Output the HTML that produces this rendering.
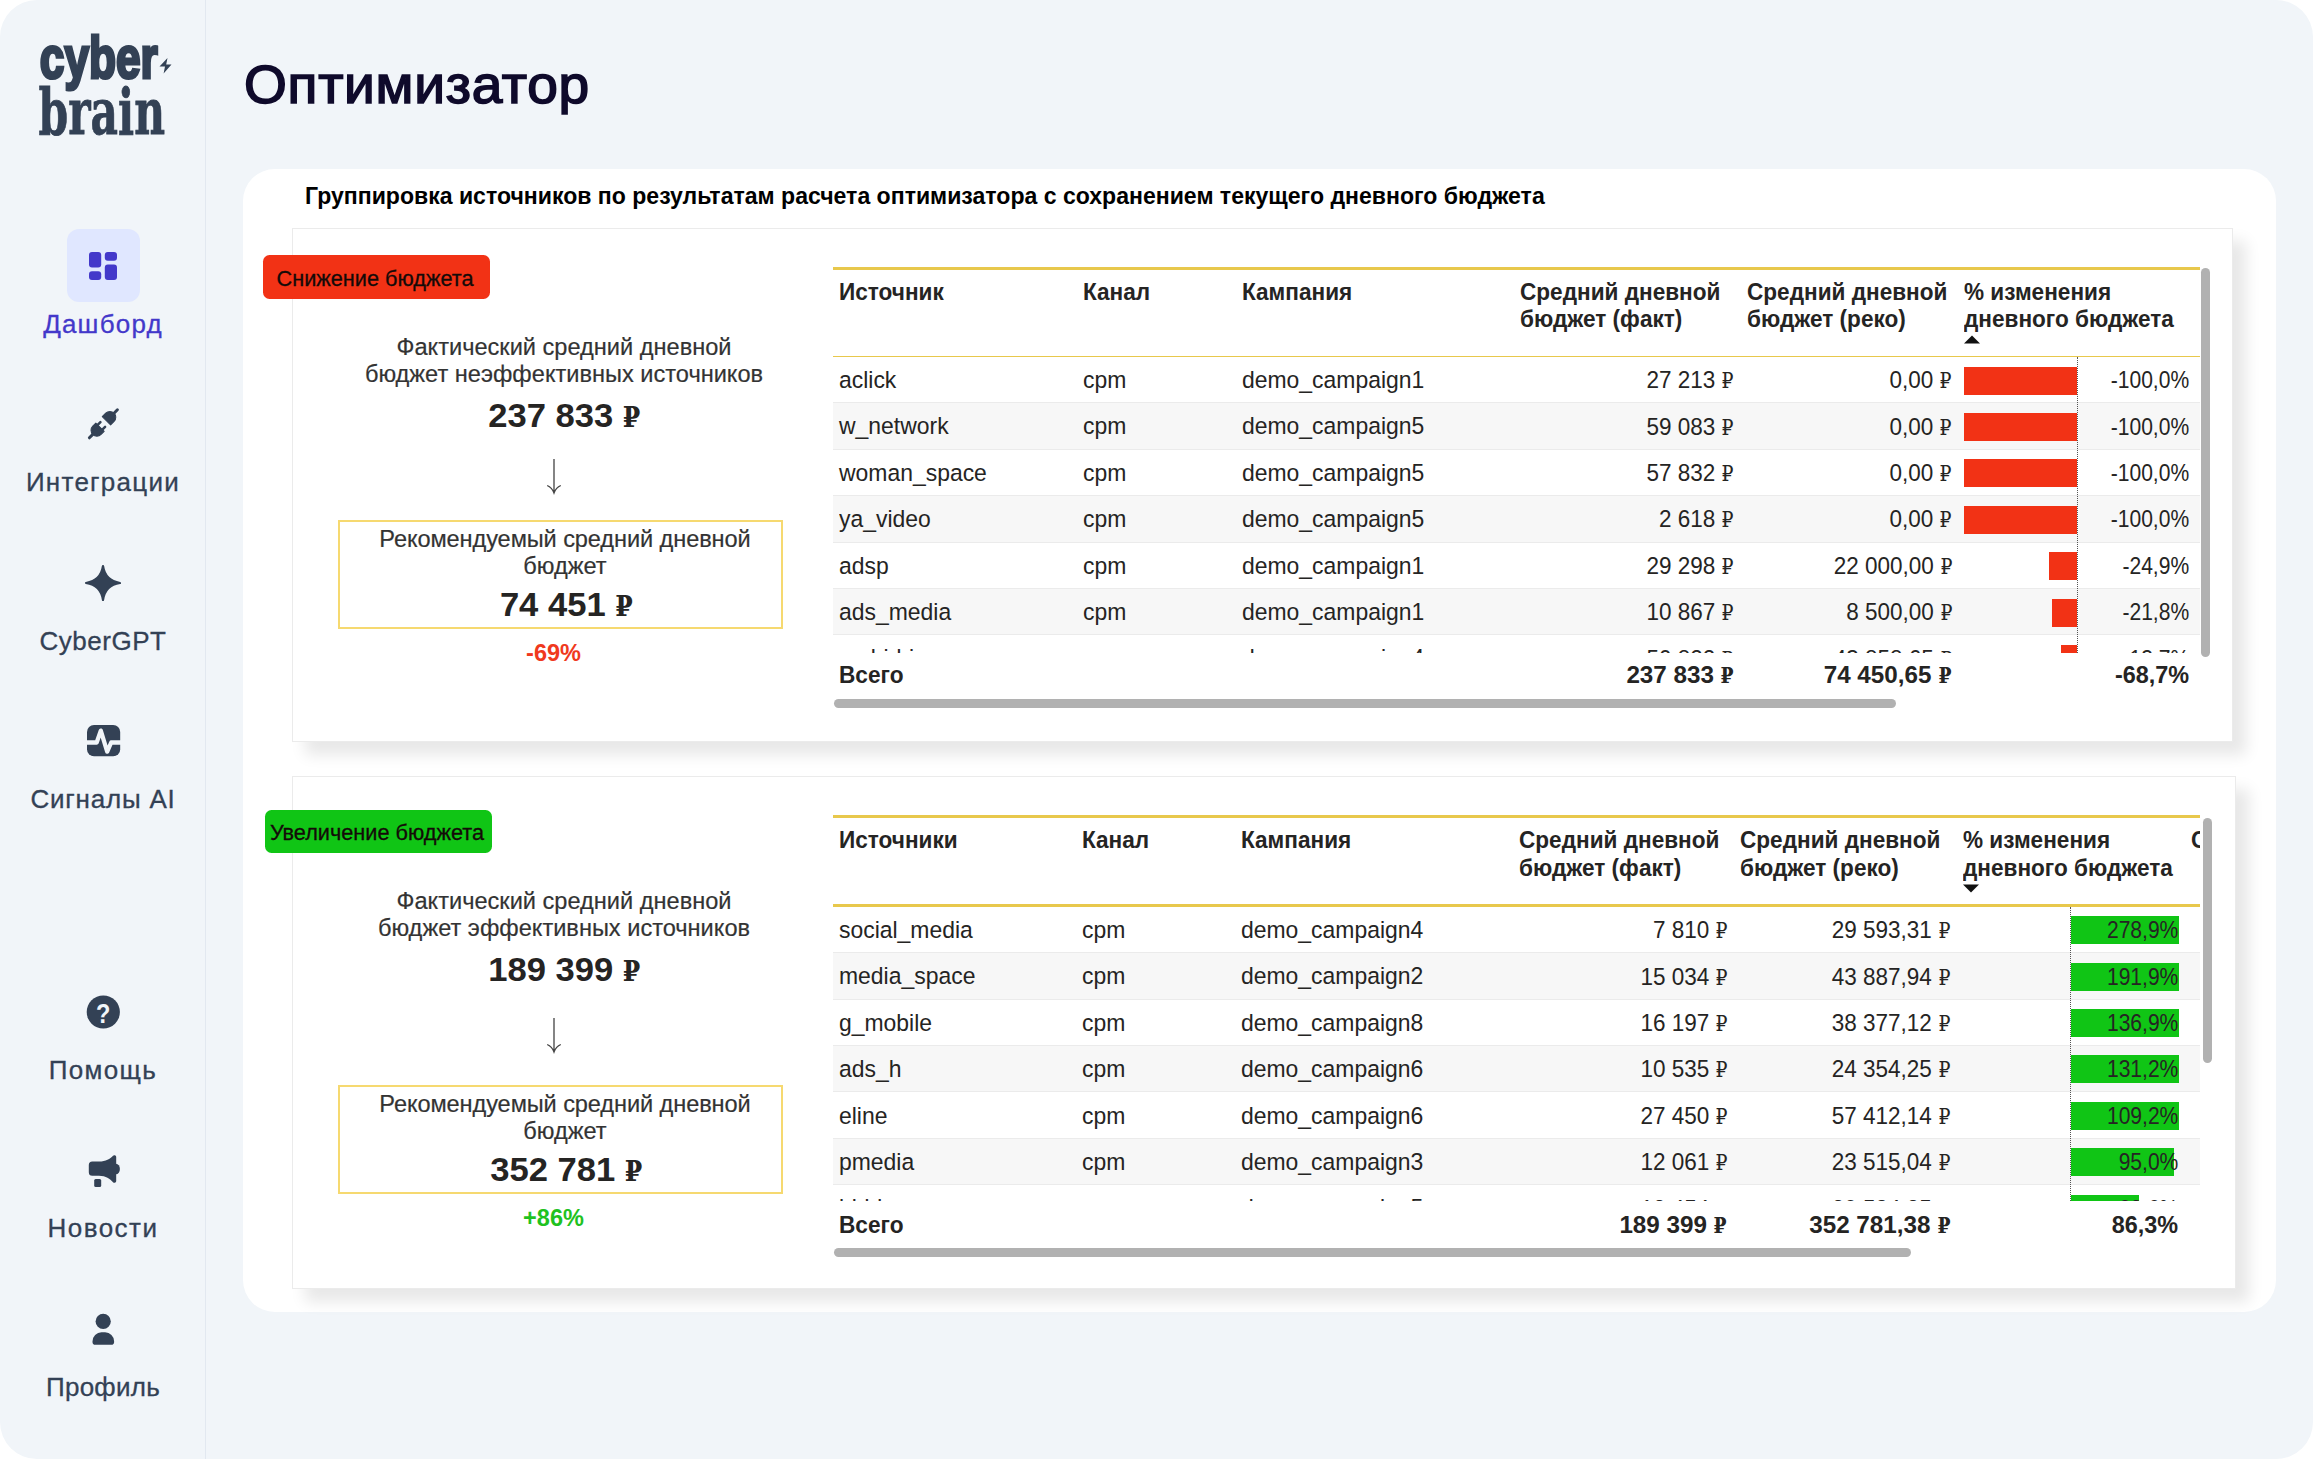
<!DOCTYPE html>
<html lang="ru">
<head>
<meta charset="utf-8">
<title>Оптимизатор — CyberBrain</title>
<style>
html,body{margin:0;padding:0;}
body{width:2313px;height:1459px;background:#fff;overflow:hidden;position:relative;font-family:"Liberation Sans","DejaVu Sans",sans-serif;}
#frame{position:absolute;left:0;top:0;width:2313px;height:1459px;background:#f1f5f9;border-radius:37px;overflow:hidden;}
.t{position:absolute;white-space:nowrap;line-height:1;}
.rub{font-family:"DejaVu Serif","Liberation Serif",serif;font-size:0.93em;display:inline-block;width:0.54em;transform:scaleX(0.9);transform-origin:0 100%;}
.tot .rub{width:0.56em;transform:scaleX(0.83);}
.big .rub{font-size:0.87em;width:0.56em;transform:scaleX(0.836);}
svg{position:absolute;overflow:visible;}
.al{transform-origin:0 0;}
.ar{transform-origin:100% 0;}
.ac{transform-origin:50% 0;}
.nav{font-size:26px;font-weight:400;color:#334155;letter-spacing:0.6px;-webkit-text-stroke:0.3px currentColor;}
.navA{font-size:26px;font-weight:400;color:#4338ca;letter-spacing:0.6px;-webkit-text-stroke:0.3px currentColor;}
.h1{font-size:53.5px;font-weight:400;color:#0f0a2b;letter-spacing:0.7px;transform:scaleX(1.03);-webkit-text-stroke:1.6px #0f0a2b;}
.ct{font-size:23.5px;font-weight:700;color:#000;letter-spacing:0px;transform:scaleX(0.9812);}
.badge{font-size:21.8px;font-weight:400;color:#140a08;letter-spacing:0px;transform:scaleX(0.995);-webkit-text-stroke:0.3px currentColor;}
.lbl{font-size:24.5px;font-weight:400;color:#333;letter-spacing:0px;transform:scaleX(0.9626);-webkit-text-stroke:0.2px currentColor;}
.big{font-size:33px;font-weight:700;color:#252423;letter-spacing:0px;transform:scaleX(1.048);}
.pct{font-size:23.5px;font-weight:700;color:#f0391d;letter-spacing:0px;}
.th{font-size:23.1px;font-weight:700;color:#252423;letter-spacing:0px;transform:scaleX(0.978);}
.td{font-size:23.7px;font-weight:400;color:#252423;letter-spacing:0px;transform:scaleX(0.968);}
.tot{font-size:23.4px;font-weight:700;color:#252423;letter-spacing:0px;transform:scaleX(1.035);}
.totl{font-size:23.4px;font-weight:700;color:#252423;letter-spacing:0px;transform:scaleX(0.968);}
.totp{font-size:23.4px;font-weight:700;color:#252423;letter-spacing:0px;}
.num{font-size:23.4px;font-weight:400;color:#252423;letter-spacing:0px;transform:scaleX(0.962);}
.pc{font-size:23.4px;font-weight:400;color:#252423;letter-spacing:0px;transform:scaleX(0.9);}
</style>
</head>
<body>
<div id="frame">
<nav aria-label="Главное меню">
<div style="position:absolute;left:205px;top:0px;width:1px;height:1459px;background:#e2e8f0;"></div>
<svg style="left:30px;top:25px" width="160" height="120" viewBox="30 25 160 120"><text x="39.8" y="78.4" font-family='"Liberation Sans", "DejaVu Sans", sans-serif' font-weight="700" font-size="60" fill="#334155" stroke="#334155" stroke-width="3.2" textLength="118" lengthAdjust="spacingAndGlyphs">cyber</text><text x="38.5" y="133.6" font-family='"DejaVu Serif","Liberation Serif",serif' font-weight="700" font-size="64" fill="#334155" stroke="#334155" stroke-width="0.8" textLength="126.5" lengthAdjust="spacingAndGlyphs">brain</text><path d="M167.5 57.9 L159.5 66.6 L165 66.6 L163.6 73.5 L171.5 64.6 L166.2 64.6 Z" fill="#334155"/></svg>
<div style="position:absolute;left:67px;top:229px;width:73px;height:73px;background:#e0e7ff;border-radius:12px;"></div>
<svg style="left:89px;top:251.5px" width="28" height="28" viewBox="0 0 28 28" fill="#4338ca"><rect x="0" y="0" width="12.2" height="15.6" rx="3"/><rect x="15.8" y="0" width="12.2" height="8.8" rx="3"/><rect x="0" y="19.2" width="12.2" height="8.8" rx="3"/><rect x="15.8" y="12.4" width="12.2" height="15.6" rx="3"/></svg>
<div class="t navA ac" style="top:310.89px;left:-497px;width:1200px;text-align:center;letter-spacing:1.2px;">Дашборд</div>
<svg style="left:81px;top:402px" width="44" height="44" viewBox="-22 -22 44 44"><g transform="translate(0.4,-0.2) rotate(45)" fill="#334155" stroke="#334155" stroke-linecap="round"><path d="M0 -19.8 L0 -15" stroke-width="3" fill="none"/><path d="M-5.9 -4.3 L5.9 -4.3 L5.9 -9.2 A5.9 5.9 0 0 0 -5.9 -9.2 Z" stroke-width="1" stroke-linejoin="round"/><path d="M-3.3 0.9 L-3.3 4.8 M3.3 0.9 L3.3 4.8" stroke-width="2.5" fill="none"/><path d="M-5.9 4.8 L5.9 4.8 L5.9 9.2 A5.9 5.9 0 0 1 -5.9 9.2 Z" stroke-width="1" stroke-linejoin="round"/><path d="M0 15 L0 19.8" stroke-width="3" fill="none"/></g></svg>
<div class="t nav ac" style="top:469.39px;left:-497px;width:1200px;text-align:center;letter-spacing:1.27px;">Интеграции</div>
<svg style="left:83px;top:562.5px" width="40" height="40" viewBox="-20 -20 40 40"><path d="M0 -17 C1.5 -7 7 -1.5 17 0 C7 1.5 1.5 7 0 17 C-1.5 7 -7 1.5 -17 0 C-7 -1.5 -1.5 -7 0 -17 Z" fill="#334155" stroke="#334155" stroke-width="2.2" stroke-linejoin="round"/></svg>
<div class="t nav ac" style="top:627.89px;left:-497px;width:1200px;text-align:center;letter-spacing:0.53px;">CyberGPT</div>
<svg style="left:86.7px;top:725.4px" width="33.2" height="31.3" viewBox="0 0 33.2 31.3"><rect x="0" y="0" width="33.2" height="31.3" rx="7" fill="#334155"/><path d="M-1 17.5 L9.7 17.5 L13.8 5.6 L20.2 26.6 L24.2 17.5 L34.2 17.5" fill="none" stroke="#f1f5f9" stroke-width="4.3" stroke-linejoin="round"/></svg>
<div class="t nav ac" style="top:786.39px;left:-497px;width:1200px;text-align:center;letter-spacing:0.8px;">Сигналы AI</div>
<svg style="left:83px;top:992px" width="40" height="40" viewBox="-20 -20 40 40"><circle cx="0.3" cy="0" r="16.6" fill="#334155"/><text transform="translate(0.3,10.5) scale(0.84,1)" x="0" y="0" text-anchor="middle" font-family='"Liberation Sans", "DejaVu Sans", sans-serif' font-weight="700" font-size="28" fill="#f1f5f9">?</text></svg>
<div class="t nav ac" style="top:1057.39px;left:-497px;width:1200px;text-align:center;letter-spacing:1.32px;">Помощь</div>
<svg style="left:60px;top:1140px" width="90" height="60" viewBox="0 0 90 60" fill="#334155"><path d="M32.3 21.6 L39 21.6 C46 21.6 50 19 53 15.8 C54 14.7 56.2 15.2 56.2 17 L56.2 41 C56.2 42.8 54 43.3 53 42.2 C50 39 46 35.8 39 35.8 L32.3 35.8 A3.5 3.5 0 0 1 28.8 32.3 L28.8 25.1 A3.5 3.5 0 0 1 32.3 21.6 Z"/><path d="M56 23.8 A3.9 5.2 0 0 1 56 34.2 Z"/><rect x="34.2" y="39.1" width="7" height="7.9" rx="1.5"/></svg>
<div class="t nav ac" style="top:1215.39px;left:-497px;width:1200px;text-align:center;letter-spacing:1.45px;">Новости</div>
<svg style="left:60px;top:1300px" width="90" height="60" viewBox="0 0 90 60" fill="#334155"><circle cx="43.2" cy="21.4" r="7.6"/><path d="M41.5 32.3 L45.1 32.3 A9 9 0 0 1 54.1 41.3 L54.1 41.9 A2.8 2.8 0 0 1 51.3 44.7 L35.3 44.7 A2.8 2.8 0 0 1 32.5 41.9 L32.5 41.3 A9 9 0 0 1 41.5 32.3 Z"/></svg>
<div class="t nav ac" style="top:1374.39px;left:-497px;width:1200px;text-align:center;letter-spacing:0.25px;">Профиль</div>
</nav>
<main>
<div class="t h1 al" style="top:58.01px;left:244px;">Оптимизатор</div>
<div style="position:absolute;left:243px;top:169px;width:2033px;height:1143px;background:#fff;border-radius:32px;"></div>
<div class="t ct al" style="top:184.81px;left:305px;">Группировка источников по результатам расчета оптимизатора с сохранением текущего дневного бюджета</div>
<section aria-label="Снижение бюджета">
<div style="position:absolute;left:292px;top:228px;width:1941px;height:514px;background:#fff;box-shadow:13px 13px 14px rgba(0,0,0,0.095);border:1px solid #ebebeb;box-sizing:border-box;"></div>
<div style="position:absolute;left:263px;top:255.4px;width:227px;height:43.5px;background:#f23215;border-radius:6.5px;"></div>
<div class="t badge ac" style="top:267.65px;left:-224.7px;width:1200px;text-align:center;">Снижение бюджета</div>
<div class="t lbl ac" style="top:335.16px;left:-36.5px;width:1200px;text-align:center;">Фактический средний дневной</div>
<div class="t lbl ac" style="top:362.36px;left:-36.5px;width:1200px;text-align:center;">бюджет неэффективных источников</div>
<div class="t big ac" style="top:399.17px;left:-36px;width:1200px;text-align:center;">237 833 <span class="rub">₽</span></div>
<svg style="left:544px;top:458.5px" width="20" height="37" viewBox="0 0 20 37" fill="none" stroke="#444" stroke-width="1.3"><path d="M10 0 L10 33.5 M3.2 26.5 Q8 28.5 10 34 Q12 28.5 16.8 26.5"/></svg>
<div style="position:absolute;left:338px;top:520px;width:444.5px;height:109px;background:transparent;border:2px solid #f6d970;box-sizing:border-box;"></div>
<div class="t lbl ac" style="top:526.96px;left:-35px;width:1200px;text-align:center;letter-spacing:-0.1px;">Рекомендуемый средний дневной</div>
<div class="t lbl ac" style="top:553.96px;left:-35px;width:1200px;text-align:center;">бюджет</div>
<div class="t big ac" style="top:587.77px;left:-34.5px;width:1200px;text-align:center;">74 451 <span class="rub">₽</span></div>
<div class="t pct ac" style="top:641.81px;left:-46.5px;width:1200px;text-align:center;color:#f0391d;">-69%</div>
<div style="position:absolute;left:832.5px;top:266.7px;width:1367.5px;height:3px;background:#e8c84c;"></div>
<div style="position:absolute;left:832.5px;top:355.7px;width:1367.5px;height:3px;background:#e8c84c;"></div>
<div class="t th al" style="top:280.85px;left:839px;">Источник</div>
<div class="t th al" style="top:280.85px;left:1083px;">Канал</div>
<div class="t th al" style="top:280.85px;left:1242px;">Кампания</div>
<div class="t th al" style="top:280.85px;left:1520px;">Средний дневной</div>
<div class="t th al" style="top:307.95px;left:1520px;">бюджет (факт)</div>
<div class="t th al" style="top:280.85px;left:1747px;">Средний дневной</div>
<div class="t th al" style="top:307.95px;left:1747px;">бюджет (реко)</div>
<div class="t th al" style="top:280.85px;left:1964px;">% изменения</div>
<div class="t th al" style="top:307.95px;left:1964px;">дневного бюджета</div>
<svg style="left:1964px;top:335.2px" width="16" height="9" viewBox="0 0 16 9"><path d="M0 8.5 L8 0.5 L16 8.5 Z" fill="#111"/></svg>
<div style="position:absolute;left:0;top:357.0px;width:2313px;height:295.6px;overflow:hidden">
<div style="position:absolute;left:833px;top:0.0px;width:1367px;height:46.4px;background:#fff;border-bottom:1px solid #ebebeb;box-sizing:border-box;"></div>
<div style="position:absolute;left:1963.5px;top:9.6px;width:113px;height:28px;background:#f23215;"></div>
<div class="t td al" style="top:12.04px;left:839px;">aclick</div>
<div class="t td al" style="top:12.04px;left:1083px;">cpm</div>
<div class="t td al" style="top:12.04px;left:1242px;">demo_campaign1</div>
<div class="t num ar" style="top:12.29px;right:580px;">27 213 <span class="rub">₽</span></div>
<div class="t num ar" style="top:12.29px;right:362px;">0,00 <span class="rub">₽</span></div>
<div class="t pc ar" style="top:12.29px;right:124px;">-100,0%</div>
<div style="position:absolute;left:833px;top:46.4px;width:1367px;height:46.4px;background:#f7f7f7;border-bottom:1px solid #ebebeb;box-sizing:border-box;"></div>
<div style="position:absolute;left:1963.5px;top:56.0px;width:113px;height:28px;background:#f23215;"></div>
<div class="t td al" style="top:58.44px;left:839px;">w_network</div>
<div class="t td al" style="top:58.44px;left:1083px;">cpm</div>
<div class="t td al" style="top:58.44px;left:1242px;">demo_campaign5</div>
<div class="t num ar" style="top:58.69px;right:580px;">59 083 <span class="rub">₽</span></div>
<div class="t num ar" style="top:58.69px;right:362px;">0,00 <span class="rub">₽</span></div>
<div class="t pc ar" style="top:58.69px;right:124px;">-100,0%</div>
<div style="position:absolute;left:833px;top:92.8px;width:1367px;height:46.4px;background:#fff;border-bottom:1px solid #ebebeb;box-sizing:border-box;"></div>
<div style="position:absolute;left:1963.5px;top:102.39999999999999px;width:113px;height:28px;background:#f23215;"></div>
<div class="t td al" style="top:104.84px;left:839px;">woman_space</div>
<div class="t td al" style="top:104.84px;left:1083px;">cpm</div>
<div class="t td al" style="top:104.84px;left:1242px;">demo_campaign5</div>
<div class="t num ar" style="top:105.09px;right:580px;">57 832 <span class="rub">₽</span></div>
<div class="t num ar" style="top:105.09px;right:362px;">0,00 <span class="rub">₽</span></div>
<div class="t pc ar" style="top:105.09px;right:124px;">-100,0%</div>
<div style="position:absolute;left:833px;top:139.2px;width:1367px;height:46.4px;background:#f7f7f7;border-bottom:1px solid #ebebeb;box-sizing:border-box;"></div>
<div style="position:absolute;left:1963.5px;top:148.79999999999998px;width:113px;height:28px;background:#f23215;"></div>
<div class="t td al" style="top:151.24px;left:839px;">ya_video</div>
<div class="t td al" style="top:151.24px;left:1083px;">cpm</div>
<div class="t td al" style="top:151.24px;left:1242px;">demo_campaign5</div>
<div class="t num ar" style="top:151.49px;right:580px;">2 618 <span class="rub">₽</span></div>
<div class="t num ar" style="top:151.49px;right:362px;">0,00 <span class="rub">₽</span></div>
<div class="t pc ar" style="top:151.49px;right:124px;">-100,0%</div>
<div style="position:absolute;left:833px;top:185.6px;width:1367px;height:46.4px;background:#fff;border-bottom:1px solid #ebebeb;box-sizing:border-box;"></div>
<div style="position:absolute;left:2048.5px;top:195.2px;width:28px;height:28px;background:#f23215;"></div>
<div class="t td al" style="top:197.64px;left:839px;">adsp</div>
<div class="t td al" style="top:197.64px;left:1083px;">cpm</div>
<div class="t td al" style="top:197.64px;left:1242px;">demo_campaign1</div>
<div class="t num ar" style="top:197.89px;right:580px;">29 298 <span class="rub">₽</span></div>
<div class="t num ar" style="top:197.89px;right:362px;">22 000,00 <span class="rub">₽</span></div>
<div class="t pc ar" style="top:197.89px;right:124px;">-24,9%</div>
<div style="position:absolute;left:833px;top:232.0px;width:1367px;height:46.4px;background:#f7f7f7;border-bottom:1px solid #ebebeb;box-sizing:border-box;"></div>
<div style="position:absolute;left:2051.5px;top:241.6px;width:25px;height:28px;background:#f23215;"></div>
<div class="t td al" style="top:244.04px;left:839px;">ads_media</div>
<div class="t td al" style="top:244.04px;left:1083px;">cpm</div>
<div class="t td al" style="top:244.04px;left:1242px;">demo_campaign1</div>
<div class="t num ar" style="top:244.29px;right:580px;">10 867 <span class="rub">₽</span></div>
<div class="t num ar" style="top:244.29px;right:362px;">8 500,00 <span class="rub">₽</span></div>
<div class="t pc ar" style="top:244.29px;right:124px;">-21,8%</div>
<div style="position:absolute;left:833px;top:278.4px;width:1367px;height:46.4px;background:#fff;border-bottom:1px solid #ebebeb;box-sizing:border-box;"></div>
<div style="position:absolute;left:2060.5px;top:288.0px;width:16px;height:28px;background:#f23215;"></div>
<div class="t td al" style="top:290.44px;left:839px;">mobidriven</div>
<div class="t td al" style="top:290.44px;left:1083px;">cpm</div>
<div class="t td al" style="top:290.44px;left:1242px;">demo_campaign4</div>
<div class="t num ar" style="top:290.69px;right:580px;">50 822 <span class="rub">₽</span></div>
<div class="t num ar" style="top:290.69px;right:362px;">43 858,65 <span class="rub">₽</span></div>
<div class="t pc ar" style="top:290.69px;right:124px;">-13,7%</div>
<div style="position:absolute;left:2077px;top:0;width:0;height:295.6px;border-left:1px dotted #555"></div>
</div>
<div class="t totl al" style="top:664.49px;left:839px;">Всего</div>
<div class="t tot ar" style="top:664.49px;right:580px;">237 833 <span class="rub">₽</span></div>
<div class="t tot ar" style="top:664.49px;right:362px;">74 450,65 <span class="rub">₽</span></div>
<div class="t totp ar" style="top:664.49px;right:124px;">-68,7%</div>
<div style="position:absolute;left:834px;top:698.8px;width:1062px;height:9px;background:#b1b1b1;border-radius:4.5px;"></div>
<div style="position:absolute;left:2201px;top:268px;width:9px;height:389px;background:#b1b1b1;border-radius:4.5px;"></div>
</section>
<section aria-label="Увеличение бюджета">
<div style="position:absolute;left:292px;top:776px;width:1944px;height:513px;background:#fff;box-shadow:13px 13px 14px rgba(0,0,0,0.095);border:1px solid #ebebeb;box-sizing:border-box;"></div>
<div style="position:absolute;left:265px;top:809.6px;width:227px;height:43.5px;background:#10c515;border-radius:6.5px;"></div>
<div class="t badge ac" style="top:821.85px;left:-222.7px;width:1200px;text-align:center;">Увеличение бюджета</div>
<div class="t lbl ac" style="top:889.16px;left:-36.5px;width:1200px;text-align:center;">Фактический средний дневной</div>
<div class="t lbl ac" style="top:916.36px;left:-36.5px;width:1200px;text-align:center;">бюджет эффективных источников</div>
<div class="t big ac" style="top:953.17px;left:-36px;width:1200px;text-align:center;">189 399 <span class="rub">₽</span></div>
<svg style="left:544px;top:1017.5px" width="20" height="37" viewBox="0 0 20 37" fill="none" stroke="#444" stroke-width="1.3"><path d="M10 0 L10 33.5 M3.2 26.5 Q8 28.5 10 34 Q12 28.5 16.8 26.5"/></svg>
<div style="position:absolute;left:338px;top:1085px;width:444.5px;height:109px;background:transparent;border:2px solid #f6d970;box-sizing:border-box;"></div>
<div class="t lbl ac" style="top:1091.96px;left:-35px;width:1200px;text-align:center;letter-spacing:-0.1px;">Рекомендуемый средний дневной</div>
<div class="t lbl ac" style="top:1118.96px;left:-35px;width:1200px;text-align:center;">бюджет</div>
<div class="t big ac" style="top:1152.77px;left:-34.5px;width:1200px;text-align:center;">352 781 <span class="rub">₽</span></div>
<div class="t pct ac" style="top:1206.81px;left:-46.5px;width:1200px;text-align:center;color:#1fc21f;">+86%</div>
<div style="position:absolute;left:832.5px;top:815.3px;width:1367.5px;height:3px;background:#e8c84c;"></div>
<div style="position:absolute;left:832.5px;top:904.3px;width:1367.5px;height:3px;background:#e8c84c;"></div>
<div class="t th al" style="top:829.45px;left:839px;">Источники</div>
<div class="t th al" style="top:829.45px;left:1082px;">Канал</div>
<div class="t th al" style="top:829.45px;left:1241px;">Кампания</div>
<div class="t th al" style="top:829.45px;left:1519px;">Средний дневной</div>
<div class="t th al" style="top:856.55px;left:1519px;">бюджет (факт)</div>
<div class="t th al" style="top:829.45px;left:1740px;">Средний дневной</div>
<div class="t th al" style="top:856.55px;left:1740px;">бюджет (реко)</div>
<div class="t th al" style="top:829.45px;left:1963px;">% изменения</div>
<div class="t th al" style="top:856.55px;left:1963px;">дневного бюджета</div>
<svg style="left:1963px;top:883.8px" width="16" height="9" viewBox="0 0 16 9"><path d="M0 0.5 L8 8.5 L16 0.5 Z" fill="#111"/></svg>
<div style="position:absolute;left:2191px;top:821.8px;width:9px;height:60px;overflow:hidden"><div class="t th al" style="left:0;top:6.95px">Средний</div></div>
<div style="position:absolute;left:0;top:906.9px;width:2313px;height:294.6px;overflow:hidden">
<div style="position:absolute;left:833px;top:0.0px;width:1367px;height:46.4px;background:#fff;border-bottom:1px solid #ebebeb;box-sizing:border-box;"></div>
<div style="position:absolute;left:2070.5px;top:9.4px;width:108px;height:28px;background:#10c515;"></div>
<div class="t td al" style="top:12.04px;left:839px;">social_media</div>
<div class="t td al" style="top:12.04px;left:1082px;">cpm</div>
<div class="t td al" style="top:12.04px;left:1241px;">demo_campaign4</div>
<div class="t num ar" style="top:12.29px;right:586.4000000000001px;">7 810 <span class="rub">₽</span></div>
<div class="t num ar" style="top:12.29px;right:363.5999999999999px;">29 593,31 <span class="rub">₽</span></div>
<div class="t pc ar" style="top:12.29px;right:135px;">278,9%</div>
<div style="position:absolute;left:833px;top:46.4px;width:1367px;height:46.4px;background:#f7f7f7;border-bottom:1px solid #ebebeb;box-sizing:border-box;"></div>
<div style="position:absolute;left:2070.5px;top:55.8px;width:108px;height:28px;background:#10c515;"></div>
<div class="t td al" style="top:58.44px;left:839px;">media_space</div>
<div class="t td al" style="top:58.44px;left:1082px;">cpm</div>
<div class="t td al" style="top:58.44px;left:1241px;">demo_campaign2</div>
<div class="t num ar" style="top:58.69px;right:586.4000000000001px;">15 034 <span class="rub">₽</span></div>
<div class="t num ar" style="top:58.69px;right:363.5999999999999px;">43 887,94 <span class="rub">₽</span></div>
<div class="t pc ar" style="top:58.69px;right:135px;">191,9%</div>
<div style="position:absolute;left:833px;top:92.8px;width:1367px;height:46.4px;background:#fff;border-bottom:1px solid #ebebeb;box-sizing:border-box;"></div>
<div style="position:absolute;left:2070.5px;top:102.2px;width:108px;height:28px;background:#10c515;"></div>
<div class="t td al" style="top:104.84px;left:839px;">g_mobile</div>
<div class="t td al" style="top:104.84px;left:1082px;">cpm</div>
<div class="t td al" style="top:104.84px;left:1241px;">demo_campaign8</div>
<div class="t num ar" style="top:105.09px;right:586.4000000000001px;">16 197 <span class="rub">₽</span></div>
<div class="t num ar" style="top:105.09px;right:363.5999999999999px;">38 377,12 <span class="rub">₽</span></div>
<div class="t pc ar" style="top:105.09px;right:135px;">136,9%</div>
<div style="position:absolute;left:833px;top:139.2px;width:1367px;height:46.4px;background:#f7f7f7;border-bottom:1px solid #ebebeb;box-sizing:border-box;"></div>
<div style="position:absolute;left:2070.5px;top:148.6px;width:108px;height:28px;background:#10c515;"></div>
<div class="t td al" style="top:151.24px;left:839px;">ads_h</div>
<div class="t td al" style="top:151.24px;left:1082px;">cpm</div>
<div class="t td al" style="top:151.24px;left:1241px;">demo_campaign6</div>
<div class="t num ar" style="top:151.49px;right:586.4000000000001px;">10 535 <span class="rub">₽</span></div>
<div class="t num ar" style="top:151.49px;right:363.5999999999999px;">24 354,25 <span class="rub">₽</span></div>
<div class="t pc ar" style="top:151.49px;right:135px;">131,2%</div>
<div style="position:absolute;left:833px;top:185.6px;width:1367px;height:46.4px;background:#fff;border-bottom:1px solid #ebebeb;box-sizing:border-box;"></div>
<div style="position:absolute;left:2070.5px;top:195.0px;width:108px;height:28px;background:#10c515;"></div>
<div class="t td al" style="top:197.64px;left:839px;">eline</div>
<div class="t td al" style="top:197.64px;left:1082px;">cpm</div>
<div class="t td al" style="top:197.64px;left:1241px;">demo_campaign6</div>
<div class="t num ar" style="top:197.89px;right:586.4000000000001px;">27 450 <span class="rub">₽</span></div>
<div class="t num ar" style="top:197.89px;right:363.5999999999999px;">57 412,14 <span class="rub">₽</span></div>
<div class="t pc ar" style="top:197.89px;right:135px;">109,2%</div>
<div style="position:absolute;left:833px;top:232.0px;width:1367px;height:46.4px;background:#f7f7f7;border-bottom:1px solid #ebebeb;box-sizing:border-box;"></div>
<div style="position:absolute;left:2070.5px;top:241.4px;width:103px;height:28px;background:#10c515;"></div>
<div class="t td al" style="top:244.04px;left:839px;">pmedia</div>
<div class="t td al" style="top:244.04px;left:1082px;">cpm</div>
<div class="t td al" style="top:244.04px;left:1241px;">demo_campaign3</div>
<div class="t num ar" style="top:244.29px;right:586.4000000000001px;">12 061 <span class="rub">₽</span></div>
<div class="t num ar" style="top:244.29px;right:363.5999999999999px;">23 515,04 <span class="rub">₽</span></div>
<div class="t pc ar" style="top:244.29px;right:135px;">95,0%</div>
<div style="position:absolute;left:833px;top:278.4px;width:1367px;height:46.4px;background:#fff;border-bottom:1px solid #ebebeb;box-sizing:border-box;"></div>
<div style="position:absolute;left:2070.5px;top:287.79999999999995px;width:68px;height:28px;background:#10c515;"></div>
<div class="t td al" style="top:290.44px;left:839px;">bidder</div>
<div class="t td al" style="top:290.44px;left:1082px;">cpm</div>
<div class="t td al" style="top:290.44px;left:1241px;">demo_campaign5</div>
<div class="t num ar" style="top:290.69px;right:586.4000000000001px;">12 454 <span class="rub">₽</span></div>
<div class="t num ar" style="top:290.69px;right:363.5999999999999px;">20 534,85 <span class="rub">₽</span></div>
<div class="t pc ar" style="top:290.69px;right:135px;">62,6%</div>
<div style="position:absolute;left:2070px;top:0;width:0;height:294.6px;border-left:1px dotted #555"></div>
</div>
<div class="t totl al" style="top:1214.09px;left:839px;">Всего</div>
<div class="t tot ar" style="top:1214.09px;right:586.4px;">189 399 <span class="rub">₽</span></div>
<div class="t tot ar" style="top:1214.09px;right:363.6px;">352 781,38 <span class="rub">₽</span></div>
<div class="t totp ar" style="top:1214.09px;right:135px;">86,3%</div>
<div style="position:absolute;left:834px;top:1247.5px;width:1077px;height:9px;background:#b1b1b1;border-radius:4.5px;"></div>
<div style="position:absolute;left:2202.5px;top:818px;width:9px;height:245px;background:#b1b1b1;border-radius:4.5px;"></div>
</section>
</main>
</div>
</body>
</html>
